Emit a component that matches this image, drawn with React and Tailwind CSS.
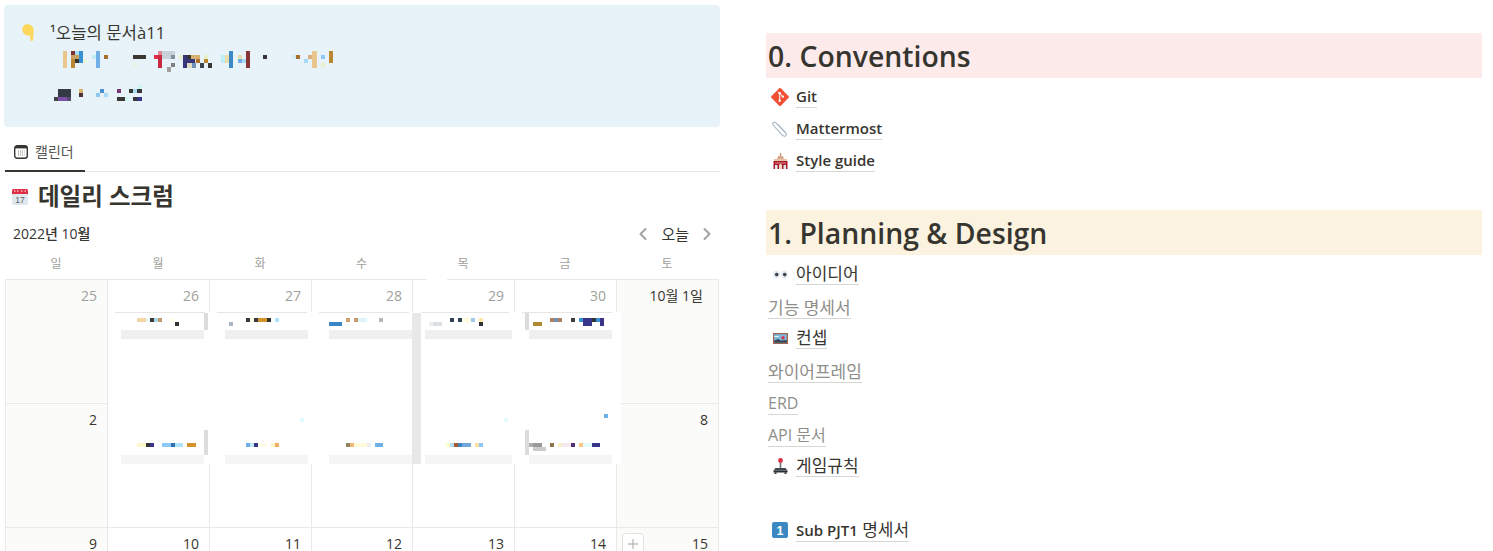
import { ChevronLeft, ChevronRight, Plus } from "lucide-react";

// [x, y, w, h, color] in page coordinates, the blurred-out parts of the screenshot
const calloutPixels = [
  [63, 51, 4, 17, "#e8c68c"], [71, 51, 4, 4, "#7f3030"], [75, 51, 4, 4, "#a8dcf5"], [79, 51, 4, 12, "#3a90d0"],
  [75, 55, 4, 4, "#c8a060"], [75, 59, 4, 4, "#333333"], [71, 55, 4, 4, "#c8a060"], [71, 59, 4, 9, "#b88830"], [83, 59, 4, 4, "#e8f5d8"],
  [96, 51, 4, 17, "#6fb0e8"], [92, 55, 4, 4, "#c0eef8"], [104, 55, 4, 4, "#a87030"],
  [133, 55, 13, 4, "#3a3835"], [133, 63, 4, 4, "#e8f2dc"],
  [154, 55, 4, 4, "#e03048"], [158, 55, 4, 13, "#c82840"], [158, 51, 4, 4, "#e08890"], [162, 51, 13, 8, "#c8d0d8"],
  [171, 55, 4, 4, "#8090a0"], [171, 63, 4, 4, "#808080"], [167, 67, 4, 5, "#a0a0a0"],
  [179, 55, 4, 4, "#e8f0c8"], [183, 55, 4, 13, "#38357a"], [187, 55, 4, 4, "#3a3835"], [187, 59, 8, 4, "#38357a"],
  [191, 55, 9, 4, "#d8b070"], [195, 59, 4, 4, "#e8dcb0"], [196, 59, 4, 4, "#a87030"], [187, 63, 5, 5, "#e0dcc0"], [192, 63, 4, 5, "#7090c0"],
  [200, 63, 4, 5, "#3a4450"], [204, 55, 4, 4, "#e8f0c8"], [204, 59, 4, 4, "#b88830"], [208, 63, 4, 5, "#3a3835"],
  [221, 55, 4, 8, "#c0eef8"], [225, 55, 4, 8, "#e8dca8"], [229, 51, 4, 17, "#3a88c8"], [238, 55, 4, 4, "#e8dca8"], [238, 59, 4, 4, "#6fb0e8"], [242, 59, 4, 4, "#a8dcf5"],
  [246, 51, 4, 17, "#8a3535"], [263, 55, 4, 4, "#333333"], [292, 55, 4, 4, "#d0f0f5"], [296, 55, 4, 4, "#a87030"], [304, 59, 4, 4, "#a8dcf5"],
  [308, 55, 4, 4, "#d8b080"], [312, 51, 5, 17, "#e8c68c"], [321, 55, 4, 4, "#8cc8fa"], [321, 63, 4, 4, "#e8f0c8"], [329, 51, 4, 12, "#b88830"],
  [58, 89, 13, 8, "#333a45"], [54, 97, 4, 4, "#444444"], [58, 97, 9, 4, "#7a50a8"], [67, 97, 4, 4, "#5a4a70"],
  [79, 89, 4, 4, "#d8b070"], [79, 93, 4, 4, "#4a3030"], [92, 89, 4, 4, "#e0f5f8"], [100, 89, 4, 4, "#4a90d0"], [96, 93, 4, 4, "#8cc8f0"], [104, 93, 4, 4, "#a8dcf5"],
  [117, 89, 4, 4, "#703a70"], [129, 89, 4, 4, "#3a3835"], [133, 89, 4, 4, "#a8dcf5"], [137, 89, 5, 4, "#3a3835"], [137, 85, 5, 4, "#d0f5f5"],
  [117, 97, 8, 4, "#3a3835"], [125, 97, 4, 4, "#d0f5f5"], [133, 97, 4, 4, "#3a3835"], [137, 97, 5, 4, "#38358a"],
];

const overlayPixels = [
  // gutters and grey bars of the pasted cards
  [115, 312, 90, 1, "#e6e6e6"], [217, 312, 90, 1, "#e6e6e6"], [319, 312, 90, 1, "#e6e6e6"], [421, 312, 88, 1, "#e6e6e6"], [522, 312, 90, 1, "#e6e6e6"],
  [204, 313, 4, 17, "#dcdcdc"], [412, 313, 9, 151, "#e8e8e6"], [525, 313, 4, 17, "#dcdcdc"],
  [121, 330, 83, 9, "#efefef"], [225, 330, 83, 9, "#efefef"], [329, 330, 83, 9, "#efefef"], [425, 330, 87, 9, "#efefef"], [529, 330, 83, 9, "#efefef"],
  [204, 430, 4, 25, "#dcdcdc"], [525, 430, 4, 25, "#dcdcdc"],
  [121, 455, 83, 9, "#f5f5f5"], [225, 455, 83, 9, "#f5f5f5"], [329, 455, 83, 9, "#f5f5f5"], [425, 455, 87, 9, "#f5f5f5"], [529, 455, 83, 9, "#f5f5f5"],
  // first row
  [137, 318, 9, 4, "#f5d5a5"], [146, 318, 4, 4, "#e6f9fb"], [150, 318, 4, 4, "#3a3a3a"], [154, 318, 4, 4, "#a8d8f0"], [158, 318, 4, 4, "#c49a6c"], [171, 318, 4, 4, "#fdfde8"], [175, 322, 4, 4, "#333333"],
  [246, 318, 4, 4, "#333a45"], [250, 318, 4, 4, "#fff8e0"], [254, 318, 4, 4, "#3a3a45"], [258, 318, 9, 4, "#d4922a"], [267, 318, 4, 4, "#333333"], [275, 318, 4, 4, "#aee4fb"], [229, 322, 4, 4, "#aab4c4"],
  [346, 318, 4, 4, "#cfa070"], [354, 318, 4, 4, "#c99a70"], [358, 318, 9, 4, "#dff3fb"], [379, 318, 4, 4, "#b8b8b8"], [329, 322, 13, 4, "#3b86c6"],
  [450, 318, 4, 4, "#33415a"], [458, 318, 4, 4, "#33415a"], [462, 318, 9, 4, "#fdfbe0"], [471, 318, 4, 4, "#a0cbe8"], [479, 318, 4, 4, "#fde6a8"], [429, 322, 4, 4, "#eeeeee"], [433, 322, 9, 4, "#dcdfe2"], [479, 322, 4, 4, "#333333"],
  [550, 318, 4, 4, "#b5835a"], [554, 318, 4, 4, "#6f8fb5"], [558, 318, 4, 4, "#b0805a"], [571, 318, 4, 4, "#443a35"], [579, 318, 4, 4, "#3a90d0"], [583, 318, 9, 8, "#39358a"], [592, 318, 4, 4, "#333333"], [596, 318, 4, 4, "#3a90d0"], [600, 318, 4, 8, "#39358a"], [533, 322, 9, 4, "#b08830"],
  // second row
  [137, 443, 9, 4, "#fdf8c8"], [146, 443, 4, 4, "#333333"], [150, 443, 4, 4, "#39358a"], [162, 443, 9, 4, "#8cc8fa"], [171, 443, 4, 4, "#3070b0"], [175, 443, 8, 4, "#aee4fb"], [187, 443, 9, 4, "#d4922a"],
  [246, 443, 4, 4, "#6fb0e8"], [250, 443, 4, 4, "#c0e8f8"], [254, 443, 4, 4, "#39358a"], [258, 443, 9, 4, "#fdfde8"], [271, 443, 4, 4, "#fdf5c8"], [275, 443, 4, 4, "#f0b060"],
  [346, 443, 4, 4, "#8f8560"], [350, 443, 4, 4, "#f0b878"], [354, 443, 13, 4, "#fdfbd8"], [367, 443, 4, 4, "#eeeeee"], [375, 443, 8, 4, "#6fb0e8"],
  [446, 443, 4, 4, "#fdfdc8"], [450, 443, 4, 4, "#b0e0f0"], [454, 443, 4, 4, "#a85a30"], [458, 443, 4, 4, "#3b86c6"], [462, 443, 9, 4, "#6fa8d8"], [475, 443, 4, 4, "#fde0a0"], [479, 443, 4, 4, "#8cc8fa"],
  [529, 443, 4, 4, "#b0b0b0"], [533, 443, 9, 4, "#999999"], [533, 447, 13, 4, "#cccccc"], [550, 443, 4, 4, "#8f7548"], [558, 443, 4, 4, "#fdf0c8"], [562, 443, 9, 4, "#f5e8f0"], [571, 443, 4, 4, "#553070"], [579, 443, 4, 4, "#fdc880"], [583, 443, 9, 4, "#e5fafa"], [592, 443, 8, 4, "#39358a"],
  // strays
  [604, 414, 4, 4, "#6fb0e8"], [300, 418, 4, 4, "#e0fbfb"], [504, 418, 4, 4, "#e5fafa"],
];

const rows = [
  [["25", "muted"], ["26", "muted"], ["27", "muted"], ["28", "muted"], ["29", "muted"], ["30", "muted"], ["10월 1일", "first"]],
  [["2"], ["3"], ["4"], ["5"], ["6"], ["7"], ["8"]],
  [["9"], ["10"], ["11"], ["12"], ["13"], ["14"], ["15"]],
];

const weekdays = ["일", "월", "화", "수", "목", "금", "토"];

function Pixels({ data, x, y, w, h, className }) {
  return (
    <svg className={className} width={w} height={h} viewBox={`${x} ${y} ${w} ${h}`} shapeRendering="crispEdges">
      {data.map(([px, py, pw, ph, fill], i) => (
        <rect key={i} x={px} y={py} width={pw} height={ph} fill={fill} />
      ))}
    </svg>
  );
}

function HandIcon() {
  return (
    <svg width="14" height="18" viewBox="0 0 14 18" fill="#fdd75c">
      <path d="M.3 5.500C.3 2.300 2.500.300 5.500.300c3 0 5.500 1.700 6 4.500.3 1.600.2 3 0 4.200l-.5 7.200c-.1 1.100-2.400 1.100-2.500 0L8 11.500c-.6.100-1.600.100-2.300-.1C2.600 11.200.3 8.700.3 5.500z" />
    </svg>
  );
}

function CalendarTabIcon() {
  return (
    <svg width="14" height="14" viewBox="0 0 14 14" fill="none">
      <rect x="0.700" y="0.700" width="12.600" height="12.600" rx="2.500" fill="#fff" stroke="#37352f" strokeWidth="1.400" />
      <rect x="1" y="1" width="12" height="2.400" fill="#37352f" />
      <path d="M4 6h6.500M4 8h6.500M4 10h6.500" stroke="#8a8985" strokeDasharray="1 1" />
    </svg>
  );
}

function CalendarEmoji() {
  return (
    <svg width="16" height="17" viewBox="0 0 16 17">
      <rect x="0" y="1" width="16" height="16" rx="1.500" fill="#e1e8ed" />
      <path d="M0 6V2.500A1.500 1.500 0 0 1 1.500 1h13A1.500 1.500 0 0 1 16 2.500V6z" fill="#dd2e44" />
      <path d="M2 3h1.500M5 3h1.500M9 3h1.500M12.500 3H14" stroke="#fff" strokeWidth="1.200" />
      <text x="8" y="15" textAnchor="middle" fontSize="8.500" fill="#55606a" fontFamily="Liberation Sans, sans-serif">17</text>
    </svg>
  );
}

function GitIcon() {
  return (
    <svg width="20" height="20" viewBox="0 0 20 20">
      <rect x="3.300" y="3.300" width="13.400" height="13.400" rx="1.200" transform="rotate(45 10 10)" fill="#f05033" />
      <path d="M8 4.500l5 5.200M9.700 6.300v7.500" stroke="#fff" strokeWidth="1" fill="none" />
      <circle cx="9.700" cy="6.300" r="1.200" fill="#fff" />
      <circle cx="12.800" cy="9.600" r="1.200" fill="#fff" />
      <circle cx="9.700" cy="13.800" r="1.200" fill="#fff" />
    </svg>
  );
}

function ClipIcon() {
  return (
    <svg width="16" height="16" viewBox="0 0 16 16" fill="none" stroke="#a5b4c2" strokeWidth="1.100" strokeLinecap="round" strokeLinejoin="round">
      <path d="M14 12.500L4.500 2.300C3.300 1 1.500 1 1 2c-.5 1 0 2 .9 3l8.400 9.200c1.300 1.300 3 1.300 3.700.3.600-.9.400-2-.5-3L6 3.700" />
    </svg>
  );
}

function SchoolIcon() {
  return (
    <svg width="15" height="16" viewBox="0 0 15 16">
      <rect x="6.800" y="0" width="1.400" height="3" fill="#c79a7c" />
      <path d="M5 3h5l1 3H4z" fill="#d9a98b" />
      <rect x="1" y="6" width="13" height="2" fill="#e6c3a9" />
      <rect x="0.500" y="8" width="14" height="8" fill="#a9172d" />
      <rect x="2" y="12" width="2.500" height="4" fill="#e1e8ed" />
      <rect x="10.500" y="12" width="2.500" height="4" fill="#e1e8ed" />
      <path d="M6 16v-4l1.500-1.500L9 12v4z" fill="#f4d9c6" />
      <path d="M2 10h11" stroke="#f2b3a9" strokeWidth="0.800" />
    </svg>
  );
}

function EyesIcon() {
  return (
    <svg width="15" height="9" viewBox="0 0 15 9">
      <ellipse cx="3.500" cy="4.500" rx="3.400" ry="4" fill="#e6ebef" />
      <ellipse cx="11.500" cy="4.500" rx="3.400" ry="4" fill="#e6ebef" />
      <circle cx="3.700" cy="4.600" r="1.800" fill="#3d4650" />
      <circle cx="11.700" cy="4.600" r="1.800" fill="#3d4650" />
    </svg>
  );
}

function PictureIcon() {
  return (
    <svg width="15" height="11" viewBox="0 0 15 11">
      <rect width="15" height="11" fill="#a0654a" />
      <rect x="1.200" y="1.200" width="12.600" height="8.600" fill="#7db8dd" />
      <path d="M1.200 4h4l1-1h-5z" fill="#eaf3f8" />
      <path d="M1.200 9.800V7.500L5 6l3 1.500 5.800-.5v2.800z" fill="#3a4856" />
      <circle cx="10" cy="4.800" r="1.700" fill="#d9344f" />
    </svg>
  );
}

function JoystickIcon() {
  return (
    <svg width="15" height="16" viewBox="0 0 15 16">
      <rect x="6.700" y="3" width="1.600" height="8" fill="#66757f" />
      <circle cx="7.500" cy="2.500" r="2.400" fill="#dd2e44" />
      <path d="M0.500 12.500l2-2.500h10l2 2.500z" fill="#414a52" />
      <rect x="0.500" y="12.500" width="14" height="2" fill="#292f33" />
      <rect x="1.500" y="14.500" width="2" height="1.500" fill="#292f33" />
      <rect x="11.500" y="14.500" width="2" height="1.500" fill="#292f33" />
    </svg>
  );
}

function KeycapIcon() {
  return (
    <svg width="16" height="16" viewBox="0 0 16 16">
      <rect width="16" height="16" rx="2" fill="#3b88c3" />
      <text x="8" y="13" textAnchor="middle" fontSize="12.500" fontWeight="700" fill="#fff" fontFamily="Liberation Sans, sans-serif">1</text>
    </svg>
  );
}

function PageLink({ icon, children, muted, className = "" }) {
  return (
    <div className={`flex items-center h-8 ${muted ? "pt-1" : ""} ${className}`}>
      {icon && <span className="w-6 h-5 flex items-center justify-center ml-[2px] mr-1 shrink-0">{icon}</span>}
      <span className={`leading-[21px] border-b border-[#d6d6d4] ${muted ? "text-[#8f8e8a]" : "text-[#37352f]"}`}>
        {children}
      </span>
    </div>
  );
}

function DayCell({ label, tone, weekend, withAdd }) {
  return (
    <div className={`border-l border-t border-[#e9e9e7] pt-[6px] flex justify-between items-start text-sm leading-5 ${tone === "first" ? "pr-[15px]" : "pr-[10px]"} ${weekend ? "bg-[#fbfbfa]" : "bg-white"} ${tone === "muted" ? "text-[#a09f9b]" : "text-[#37352f]"}`}>
      {withAdd ? (
        <span className="ml-[5px] mt-[-1px] w-[22px] h-[22px] border border-[#e3e3e1] rounded flex items-center justify-center bg-white">
          <Plus size={16} strokeWidth={1.500} className="text-[#a5a4a0]" />
        </span>
      ) : <span />}
      <span>{label}</span>
    </div>
  );
}

export default function App() {
  return (
    <div
      className="flex w-[1493px] h-[551px] overflow-hidden bg-white text-[#37352f]"
      style={{ fontFamily: '"Open Sans", "Noto Sans CJK KR", sans-serif' }}
    >
      {/* Left column */}
      <div className="w-[716px] ml-1 mt-[5px] shrink-0">
        <div className="relative h-[122px] bg-[#e7f3f8] rounded flex items-start pl-[18px] pt-[19px]">
          <HandIcon />
          <span className="ml-[14px] text-[16.700px] leading-[20px] mt-[-1px]">¹오늘의 문서à11</span>
          <Pixels data={calloutPixels} x={4} y={5} w={340} h={100} className="absolute left-0 top-0" />
        </div>

        <div className="mt-[6px] h-[39px] border-b border-[#e9e9e7] flex">
          <div className="ml-px w-20 h-[39px] border-b-2 border-[#37352f] flex items-center pl-[9px] gap-[7px] text-sm text-[#55534e]">
            <CalendarTabIcon />
            <span>캘린더</span>
          </div>
        </div>

        <div className="flex items-center h-[26px] mt-[11px] ml-2 gap-[10px]">
          <CalendarEmoji />
          <h1 className="text-[23.500px] font-semibold leading-[26px]">데일리 스크럼</h1>
        </div>

        <div className="flex items-center justify-between h-5 mt-[15px] ml-[9px] pr-[3px]">
          <span className="text-sm font-medium">2022년 10월</span>
          <div className="flex items-center gap-2 text-[15px]">
            <ChevronLeft size={20} strokeWidth={2.500} className="text-[#a5a4a0]" />
            <span>오늘</span>
            <ChevronRight size={20} strokeWidth={2.500} className="text-[#a5a4a0]" />
          </div>
        </div>

        {/* Calendar */}
        <div className="relative ml-px mt-[9px]">
          <div className="grid grid-cols-[102px_102px_102px_101px_102px_102px_102px] h-[26px]">
            {weekdays.map((d) => (
              <div key={d} className="text-center text-xs leading-[22px] text-[#a09f9b]">{d}</div>
            ))}
          </div>
          <div className="w-[714px] grid grid-cols-[102px_102px_102px_101px_102px_102px_102px] grid-rows-[124px_124px_124px] border-r border-[#e9e9e7]">
            {rows.flatMap((row, r) =>
              row.map(([label, tone], c) => (
                <DayCell
                  key={`${r}-${c}`}
                  label={label}
                  tone={tone}
                  weekend={c === 0 || c === 6}
                  withAdd={r === 2 && c === 6}
                />
              ))
            )}
          </div>
          {/* blurred screenshot pasted over the calendar */}
          <div className="absolute left-[103px] top-[59px] w-[513px] h-[152px] bg-white">
            <Pixels data={overlayPixels} x={108} y={312} w={513} h={152} />
          </div>
          <div className="absolute left-[422px] top-[26px] w-5 h-[2px] bg-white" />
        </div>
      </div>

      {/* Right column */}
      <div className="w-[716px] ml-[46px] mt-[33px] shrink-0">
        <h2 className="h-[45px] bg-[#fdebec] pl-[2px] text-[28.400px] leading-[47px] font-semibold">0. Conventions</h2>
        <div className="mt-[3px] font-semibold text-[15px]">
          <PageLink icon={<GitIcon />}>Git</PageLink>
          <PageLink icon={<ClipIcon />}>Mattermost</PageLink>
          <PageLink icon={<SchoolIcon />}>Style guide</PageLink>
        </div>

        <h2 className="mt-[33px] h-[45px] bg-[#fbf3df] pl-[2px] text-[28.400px] leading-[47px] font-semibold">1. Planning &amp; Design</h2>
        <div className="mt-[3px] text-[17px]">
          <PageLink icon={<EyesIcon />}>아이디어</PageLink>
          <PageLink muted className="pl-[2px]">기능 명세서</PageLink>
          <PageLink icon={<PictureIcon />}>컨셉</PageLink>
          <PageLink muted className="pl-[2px]">와이어프레임</PageLink>
          <PageLink muted className="pl-[2px] text-base">ERD</PageLink>
          <PageLink muted className="pl-[2px] text-base">API 문서</PageLink>
          <PageLink icon={<JoystickIcon />}>게임규칙</PageLink>
          <PageLink icon={<KeycapIcon />} className="mt-8">
            <span className="font-semibold text-[15px]">Sub PJT1</span> 명세서
          </PageLink>
        </div>
      </div>
    </div>
  );
}
